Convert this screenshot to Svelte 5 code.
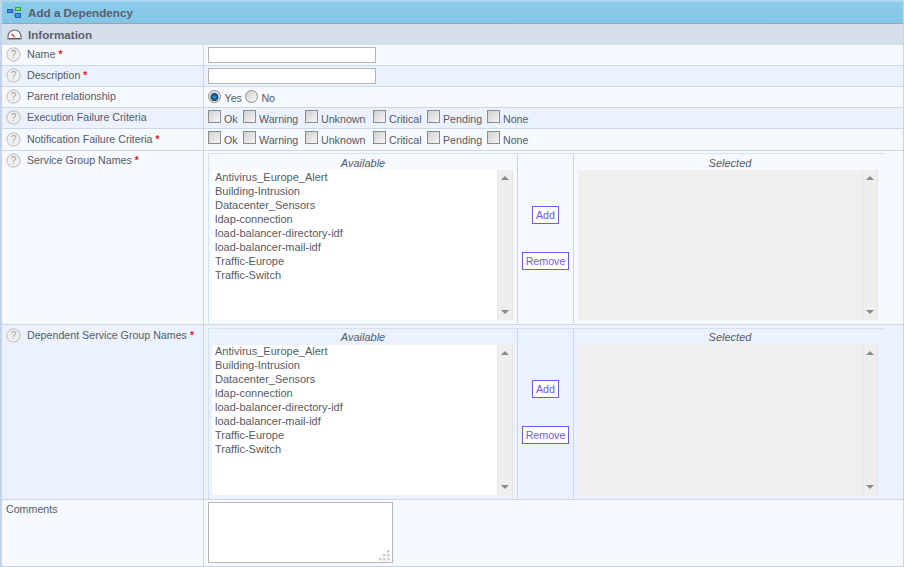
<script>
	const groups = [
		'Antivirus_Europe_Alert',
		'Building-Intrusion',
		'Datacenter_Sensors',
		'ldap-connection',
		'load-balancer-directory-idf',
		'load-balancer-mail-idf',
		'Traffic-Europe',
		'Traffic-Switch'
	];
	// each option takes a fixed slot in the row
	const criteria = [
		{ name: 'Ok', width: 35 },
		{ name: 'Warning', width: 62 },
		{ name: 'Unknown', width: 68 },
		{ name: 'Critical', width: 54 },
		{ name: 'Pending', width: 60 },
		{ name: 'None', width: 50 }
	];
</script>

{#snippet help()}
	<svg class="help" width="15" height="15" viewBox="0 0 15 15">
		<circle cx="7.5" cy="7.5" r="6.6" fill="#f0f0f0" stroke="#c8c8c8" stroke-width="1.2" />
		<text x="7.5" y="11" text-anchor="middle" font-size="10" fill="#a0a0a0">?</text>
	</svg>
{/snippet}

{#snippet scrollbar()}
	<div class="scrollbar">
		<span class="arrow up"></span>
		<span class="arrow down"></span>
	</div>
{/snippet}

{#snippet label(text, required)}
	<div class="label">
		{@render help()}
		<span>{text}</span>
		{#if required}<b class="req">*</b>{/if}
	</div>
{/snippet}

{#snippet checks()}
	<div class="value options">
		{#each criteria as item}
			<label class="check" style="width: {item.width}px"><input type="checkbox" /><span>{item.name}</span></label>
		{/each}
	</div>
{/snippet}

{#snippet picker()}
	<div class="value picker-cell">
		<div class="picker">
			<div class="side available">
				<div class="side-title">Available</div>
				<div class="list">
					<div class="items">
						{#each groups as group}
							<div>{group}</div>
						{/each}
					</div>
					{@render scrollbar()}
				</div>
			</div>
			<div class="actions">
				<button type="button">Add</button>
				<button type="button">Remove</button>
			</div>
			<div class="side selected">
				<div class="side-title">Selected</div>
				<div class="list">
					<div class="items empty"></div>
					{@render scrollbar()}
				</div>
			</div>
		</div>
	</div>
{/snippet}

<div class="page">
	<div class="title">
		<svg width="16" height="12" viewBox="0 0 16 12">
			<path d="M7 4h1M8 2v7" fill="none" stroke="#7f9ab5" />
			<rect x="1.5" y="2.5" width="5" height="3" fill="#4a86e0" stroke="#2458b8" />
			<rect x="9.5" y="0.5" width="5" height="3" fill="#7fe070" stroke="#35a82f" />
			<rect x="9.5" y="6.5" width="5" height="4" fill="#3f96e8" stroke="#1f62b0" />
		</svg>
		<span>Add a Dependency</span>
	</div>
	<div class="section">
		<svg width="15" height="11" viewBox="0 0 15 11">
			<path d="M1 10V7.5a6.5 6.5 0 0 1 13 0V10z" fill="#f6f6f6" stroke="#666" stroke-width="1.1" />
			<path d="M7.5 8 4.5 5" stroke="#d33" stroke-width="1.3" />
			<path d="M2 9.5h11" stroke="#555" />
		</svg>
		<span>Information</span>
	</div>

	<div class="row odd r21">
		{@render label('Name', true)}
		<div class="value"><input class="text" type="text" /></div>
	</div>
	<div class="row even r21">
		{@render label('Description', true)}
		<div class="value"><input class="text" type="text" /></div>
	</div>
	<div class="row odd r21">
		{@render label('Parent relationship', false)}
		<div class="value options radios">
			<label class="check"><span class="radio on"></span><span>Yes</span></label>
			<label class="check"><span class="radio"></span><span>No</span></label>
		</div>
	</div>
	<div class="row even r21">
		{@render label('Execution Failure Criteria', false)}
		{@render checks()}
	</div>
	<div class="row odd r22">
		{@render label('Notification Failure Criteria', true)}
		{@render checks()}
	</div>
	<div class="row odd r174">
		{@render label('Service Group Names', true)}
		{@render picker()}
	</div>
	<div class="row even r175">
		{@render label('Dependent Service Group Names', true)}
		{@render picker()}
	</div>
	<div class="row odd comments">
		<div class="label plain"><span>Comments</span></div>
		<div class="value">
			<div class="textarea">
				<svg class="grip" width="12" height="12" viewBox="0 0 12 12" fill="#cacaca">
					<rect x="8" y="0" width="2.5" height="2.5" />
					<rect x="4" y="4" width="2.5" height="2.5" />
					<rect x="8" y="4" width="2.5" height="2.5" />
					<rect x="0" y="8" width="2.5" height="2.5" />
					<rect x="4" y="8" width="2.5" height="2.5" />
					<rect x="8" y="8" width="2.5" height="2.5" />
				</svg>
			</div>
		</div>
	</div>
</div>

<style>
	:global(body) {
		margin: 0;
		background: #fff;
	}

	.page {
		width: 904px;
		height: 567px;
		box-sizing: border-box;
		border-left: 2px solid #c3d3e8;
		border-right: 1px solid #c3d3e8;
		border-bottom: 1px solid #c3d3e8;
		font-family: 'Liberation Sans', Arial, sans-serif;
		font-size: 10.67px;
		color: #555a66;
		overflow: hidden;
	}

	.title {
		height: 24px;
		box-sizing: border-box;
		margin-left: -2px;
		padding: 1px 0 0 6px;
		display: flex;
		align-items: center;
		gap: 6px;
		background: linear-gradient(#b5def2 0, #8acaea 3px, #84c6e8 100%);
		border-bottom: 1px solid #9aa5b0;
		font-size: 11.67px;
		font-weight: bold;
		color: #56606e;
	}

	.title svg {
		margin-top: 1px;
	}

	.section {
		height: 21px;
		box-sizing: border-box;
		margin-left: -2px;
		padding-left: 6px;
		display: flex;
		align-items: center;
		gap: 6px;
		background: #d5dfeb;
		border-left: 1px solid #a9b2bd;
		font-size: 11.67px;
		font-weight: bold;
		color: #5a606c;
	}

	.row {
		display: grid;
		grid-template-columns: 202px 1fr;
		box-sizing: border-box;
		border-bottom: 1px solid #c9d7ea;
	}

	.odd {
		background: #f6f9ff;
	}

	.even {
		background: #ebf2fe;
	}

	.r21 {
		height: 21px;
	}

	.r22 {
		height: 22px;
	}

	.r174 {
		height: 174px;
	}

	.r175 {
		height: 175px;
	}

	.comments {
		height: 66px;
		border-bottom: 0;
	}

	.label {
		display: flex;
		align-items: flex-start;
		padding: 2px 0 0 4px;
		gap: 6px;
		border-right: 1px solid #c9d7ea;
		line-height: 14px;
	}

	.r22 .label,
	.r175 .label {
		padding-top: 3px;
	}

	.help {
		flex: none;
	}

	.req {
		margin: 1px 0 0 -3px;
		color: #e01010;
		font-size: 10px;
	}

	.value {
		padding: 2px 0 0 4px;
		min-width: 0;
	}

	.text {
		display: block;
		width: 168px;
		height: 16px;
		box-sizing: border-box;
		margin: 0;
		border: 1px solid #b5b5b5;
		background: #fff;
		border-radius: 0;
	}

	.options {
		display: flex;
		padding-top: 2px;
	}

	.radios {
		gap: 3px;
	}

	.check {
		display: flex;
		align-items: flex-start;
		gap: 3px;
		line-height: 14px;
	}

	.radios .check {
		gap: 3.5px;
	}

	.check span:last-child {
		padding-top: 2px;
	}

	.check input {
		appearance: none;
		flex: none;
		width: 13px;
		height: 13px;
		margin: 0;
		box-sizing: border-box;
		border: 1px solid #8c8c8c;
		background: linear-gradient(135deg, #d0d0d0, #f6f6f6);
	}

	.radio {
		flex: none;
		width: 13px;
		height: 13px;
		margin-top: 1px;
		box-sizing: border-box;
		border: 1px solid #8c8c8c;
		border-radius: 50%;
		background: linear-gradient(135deg, #d0d0d0, #f8f8f8);
	}

	.radio.on {
		background: radial-gradient(circle at 50% 55%, #35a0e0 0, #14507f 3px, #1a3f60 3.6px, #e4e4e4 4.4px);
	}

	.picker {
		display: flex;
		width: 676px;
		height: 171px;
		border-top: 1px solid #d5e0f0;
	}

	.r175 .picker-cell {
		padding-top: 3px;
	}

	.side {
		border-left: 1px solid #d5e0f0;
		padding-left: 3px;
		height: 170px;
		font-size: 11px;
	}

	.available {
		width: 305px;
	}

	.selected {
		width: 304px;
		border-left: 0;
		padding-left: 4px;
	}

	.side-title {
		height: 16px;
		line-height: 18px;
		text-align: center;
		font-style: italic;
		padding-right: 3px;
	}

	.selected .side-title {
		width: 300px;
		box-sizing: border-box;
		padding: 0 0 0 4px;
	}

	.r175 .side-title {
		line-height: 16px;
	}

	.list {
		display: flex;
		height: 150px;
	}

	.available .list {
		width: 301px;
	}

	.selected .list {
		width: 300px;
	}

	.items {
		flex: 1;
		background: #fff;
		padding: 0 0 0 3px;
		line-height: 14px;
	}

	.r175 .items div:first-child {
		margin-top: -1px;
	}

	.empty {
		background: #efefef;
	}

	.scrollbar {
		flex: none;
		width: 16px;
		display: flex;
		flex-direction: column;
		justify-content: space-between;
		align-items: center;
		padding: 6px 0;
		box-sizing: border-box;
		background: #eeeeee;
		border-left: 1px solid #e6e6e6;
		border-right: 1px solid #e4e4e4;
	}

	.arrow {
		width: 0;
		height: 0;
		border-left: 4px solid transparent;
		border-right: 4px solid transparent;
	}

	.up {
		border-bottom: 4px solid #8a8a8a;
	}

	.down {
		border-top: 4px solid #8a8a8a;
	}

	.actions {
		flex: none;
		width: 57px;
		box-sizing: border-box;
		height: 169px;
		border-left: 1px solid #c9d7ea;
		border-right: 1px solid #c9d7ea;
		display: flex;
		flex-direction: column;
		align-items: center;
		gap: 28px;
		padding-top: 52px;
	}

	.r175 .actions {
		padding-top: 51px;
	}

	button {
		height: 18px;
		box-sizing: border-box;
		padding: 0 3px;
		background: #fff;
		border: 1px solid #6a5af0;
		border-radius: 0;
		color: #6a5af0;
		font: 10.67px 'Liberation Sans', Arial, sans-serif;
	}

	.textarea {
		position: relative;
		width: 185px;
		height: 61px;
		box-sizing: border-box;
		border: 1px solid #b5b5b5;
		background: #fff;
	}

	.grip {
		position: absolute;
		right: 1px;
		bottom: 0;
	}
</style>
